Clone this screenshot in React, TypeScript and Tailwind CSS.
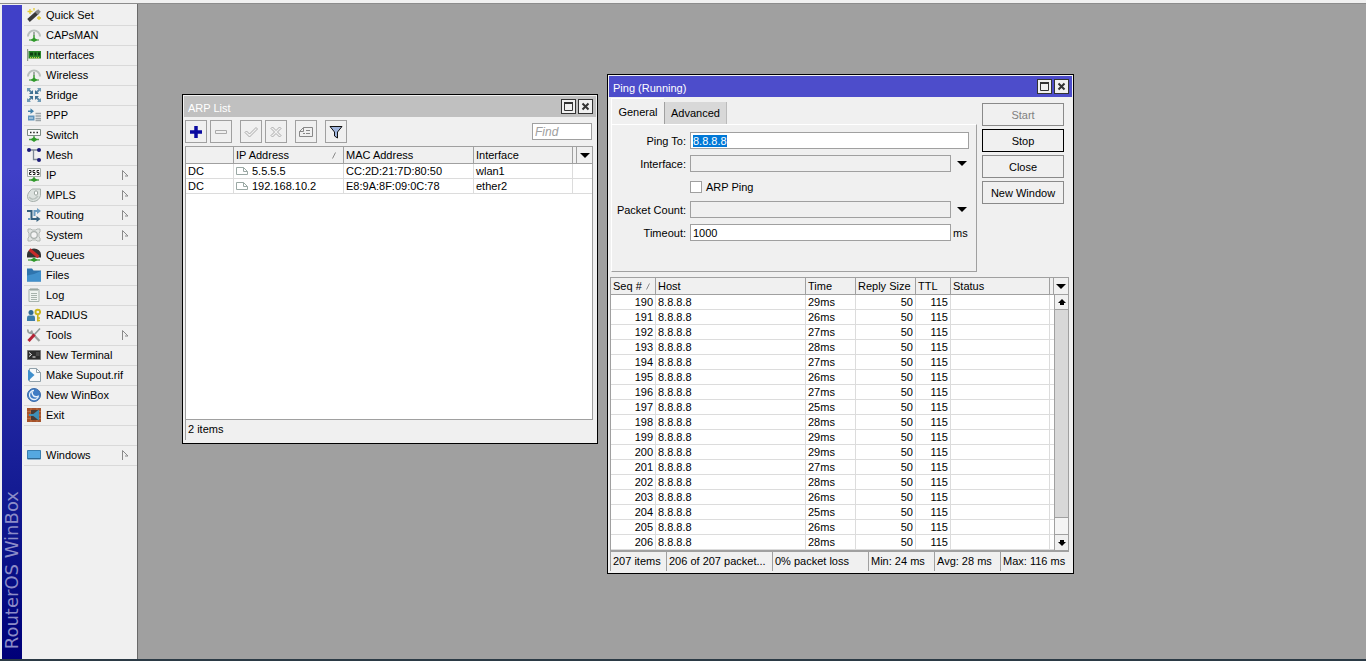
import cx from "clsx"
import React from "react"

type MenuEntry = {
  label: string
  icon: React.ReactNode
  submenu?: boolean
}

const Antenna = () => (
  <>
    <path d="M1 8.500a6 6 0 1 1 12 0" fill="none" stroke="#b9c0bd" strokeWidth="2" />
    <path d="M7 4v3" stroke="#8b9691" strokeWidth="1.500" />
    <path d="M7 7v5" stroke="#3c9a36" strokeWidth="1.500" />
    <path d="M2 12h10" stroke="#6aa865" strokeWidth="1.400" />
    <path d="M3.500 12L7 9.500l3.500 2.500L7 14z" fill="#2f9a2a" />
  </>
)

const MENU: MenuEntry[] = [
  {
    label: "Quick Set",
    icon: (
      <>
        <path d="M1.500 12.500L11 4" stroke="#3a3a3a" strokeWidth="3.800" />
        <path d="M9.500 5.500L12.500 2.500" stroke="#8a8a8a" strokeWidth="3.800" />
        <path d="M3 1v5M.5 3.500h5M7 0v2.500M12 8v4M10 10h4" stroke="#e3cc35" strokeWidth="1.300" />
      </>
    ),
  },
  { label: "CAPsMAN", icon: <Antenna /> },
  {
    label: "Interfaces",
    icon: (
      <>
        <path d="M.6 1v12" stroke="#8c9a8c" strokeWidth="1.200" />
        <path d="M1.500 3h12.500v7.500H1.500z" fill="#2a852a" />
        <path d="M3 4.500h3v3H3zM7.500 4.500h2v3h-2zM11 4.500h2v3h-2z" fill="#0d3f12" />
        <path d="M3 9.800h10" stroke="#b9d24a" strokeWidth="1.400" strokeDasharray="1 1" />
      </>
    ),
  },
  { label: "Wireless", icon: <Antenna /> },
  {
    label: "Bridge",
    icon: (
      <>
        <path d="M1 1l4 4M13 1L9 5M1 13l4-4M13 13l-4-4" stroke="#5b88a6" strokeWidth="1.800" />
        <path d="M6 2v4H2zM8 2v4h4zM6 12V8H2zM8 12V8h4z" fill="#3f6f90" />
        <path d="M0 0h4L0 4zM14 0h-4l4 4zM0 14h4l-4-4zM14 14h-4l4-4z" fill="#6f9ab6" />
      </>
    ),
  },
  {
    label: "PPP",
    icon: (
      <>
        <path d="M1 2.500h2.500V.3L7 3.200 3.500 6V4H1z" fill="#3f7fa8" />
        <path d="M1 7.500h6.500v5H1z" fill="#5f94bd" />
        <path d="M2 10h4" stroke="#d5e5ef" />
        <path d="M8.500 5.500H14M8.500 8H14M8.500 10.500H14M8.500 12.500H14" stroke="#9aa3a8" strokeWidth="1.300" />
      </>
    ),
  },
  {
    label: "Switch",
    icon: (
      <>
        <path d="M.5 1.500h13v6H.5z" fill="#fafafa" stroke="#7d8b84" />
        <path d="M3 4.500h1.500M6.200 4.500h1.500M9.500 4.500H11" stroke="#222" strokeWidth="1.400" />
        <path d="M7 8v3M2 11.500h10" stroke="#55a04e" strokeWidth="1.400" />
        <path d="M3.500 11.500L7 9l3.500 2.500L7 14z" fill="#2f9a2a" />
      </>
    ),
  },
  {
    label: "Mesh",
    icon: (
      <>
        <path d="M2 2h10M6.500 2v9.500H12" fill="none" stroke="#7b8794" strokeWidth="1.300" />
        <circle cx="2" cy="2" r="2" fill="#1b1b78" />
        <circle cx="12" cy="2" r="2" fill="#1b1b78" />
        <circle cx="12" cy="12" r="2" fill="#1b1b78" />
      </>
    ),
  },
  {
    label: "IP",
    submenu: true,
    icon: (
      <>
        <path d="M.5.5h13v8H.5z" fill="#fafafa" stroke="#a9b0ac" />
        <path
          d="M2 2.500h2v2H2.500v2h2M8 2.500H6v2h2v2H6M12 2.500h-2v2h2v2h-2"
          fill="none"
          stroke="#222"
        />
        <path d="M7 9v2M2 12h10" stroke="#55a04e" strokeWidth="1.400" />
        <path d="M3.500 12L7 9.500l3.500 2.500L7 14z" fill="#2f9a2a" />
      </>
    ),
  },
  {
    label: "MPLS",
    submenu: true,
    icon: (
      <>
        <path
          d="M4.500 1.500Q5 1 6 1h7.500v6.500Q12 13 6.500 13.500C2 13.500.5 11 .5 8.500.5 6 2 3.500 4.500 1.500z"
          fill="#dce2df"
          stroke="#a5aeaa"
        />
        <path d="M2 9c2 3 6 3 9-1" fill="none" stroke="#b9c1bd" strokeWidth="1.500" />
        <ellipse cx="9" cy="5" rx="1.700" ry="2.200" fill="#fff" stroke="#9aa59f" />
      </>
    ),
  },
  {
    label: "Routing",
    submenu: true,
    icon: (
      <>
        <path d="M0 3h4.500v8H10" fill="none" stroke="#35607e" strokeWidth="2" />
        <path d="M1 11h2M7.500 8V3h3" fill="none" stroke="#6c9cc0" strokeWidth="2" />
        <path d="M10 0l4 3-4 3z" fill="#6c9cc0" />
        <path d="M9.500 8l4 3-4 3z" fill="#35607e" />
      </>
    ),
  },
  {
    label: "System",
    submenu: true,
    icon: (
      <>
        <path d="M1 1h3l1 1h4l1-1h3v3l-1 1v4l1 1v3h-3l-1-1H5l-1 1H1v-3l1-1V5L1 4z" fill="#e1e4e2" stroke="#b0b6b3" />
        <circle cx="7" cy="7" r="3.300" fill="#f3f3f3" stroke="#aab0ad" strokeWidth="1.200" />
      </>
    ),
  },
  {
    label: "Queues",
    icon: (
      <>
        <path d="M0 9.500V6.500a7 6 0 0 1 14 0v3z" fill="#333" />
        <path d="M2.500 1.500l9 7.500" stroke="#c92a2a" strokeWidth="3" />
        <path d="M1 12h12" stroke="#55a04e" strokeWidth="1.400" />
        <path d="M3.500 12L7 9.500l3.500 2.500L7 14z" fill="#2f9a2a" />
      </>
    ),
  },
  {
    label: "Files",
    icon: (
      <>
        <path d="M0 .5h5l1.500 2H14v11H0z" fill="#2f74ad" />
        <path d="M0 7.500L7 6l7-3v10.500H0z" fill="#4190cc" />
      </>
    ),
  },
  {
    label: "Log",
    icon: (
      <>
        <path d="M2 1.500h10v12H2z" fill="#eff3f1" stroke="#a7b3ad" />
        <path d="M4 0v3M6 0v3M8 0v3M10 0v3" stroke="#8f9b95" />
        <path d="M4 5.500h6M4 7.500h6M4 9.500h6M4 11.500h6" stroke="#a7b3ad" />
      </>
    ),
  },
  {
    label: "RADIUS",
    icon: (
      <>
        <circle cx="4" cy="4.500" r="2.500" fill="#2f6a94" />
        <path d="M0 13V9.500Q0 7.500 2 7.500h4q2 0 2 2V13z" fill="#3c7dab" />
        <circle cx="10.800" cy="4" r="2.300" fill="none" stroke="#c9b51c" strokeWidth="1.900" />
        <path d="M10.800 6v7.500M11 10h2M11 12.500h2" stroke="#c9b51c" strokeWidth="1.600" />
      </>
    ),
  },
  {
    label: "Tools",
    submenu: true,
    icon: (
      <>
        <path d="M3.500 3.500l9 9.500" stroke="#9aa19e" strokeWidth="2.200" />
        <path d="M1 1.500C.5 4 2 5.500 4.500 5L5 2.500" fill="none" stroke="#9aa19e" strokeWidth="1.800" />
        <path d="M13 .5L7 7" stroke="#8f9a98" strokeWidth="1.600" />
        <path d="M7.500 6.500L1.500 13" stroke="#b52436" strokeWidth="3" />
      </>
    ),
  },
  {
    label: "New Terminal",
    icon: (
      <>
        <path d="M.5 2.500h13v9H.5z" fill="#2c2c2c" stroke="#777" />
        <path d="M2 4.500l2.500 2L2 8.500M5.500 9h3" fill="none" stroke="#f2f2f2" />
        <path d="M9 5h3.500M9 7h3.500" stroke="#666" />
      </>
    ),
  },
  {
    label: "Make Supout.rif",
    icon: (
      <>
        <path d="M2.500.5h7l4 4v9h-11z" fill="#f7f9fa" stroke="#8fa0aa" />
        <path d="M9.500.5v4h4" fill="none" stroke="#8fa0aa" />
        <path d="M1 1.500L7.500 7 1 13z" fill="#3f8fcc" />
      </>
    ),
  },
  {
    label: "New WinBox",
    icon: (
      <>
        <circle cx="7" cy="7" r="6.500" fill="#3f7cc4" stroke="#3a6aa8" />
        <path d="M7 2.500a4.500 4.500 0 1 0 4.500 5" fill="none" stroke="#e8f1fa" strokeWidth="1.300" />
        <path d="M5 3.500c0 4 2 6 6 5" fill="none" stroke="#e8f1fa" strokeWidth="1.500" />
      </>
    ),
  },
  {
    label: "Exit",
    icon: (
      <>
        <path d="M0 0h14v14H0z" fill="#a5522a" />
        <path d="M0 3.500h14M0 7h14M0 10.500h14M4 0v14M10 0v14" stroke="#c98357" strokeWidth=".6" />
        <path d="M4 2h8v10H4z" fill="#4a3a34" />
        <path d="M12 1.500v11L5 7z" fill="#3f8fb8" />
        <path d="M2 7h5" stroke="#3f8fb8" strokeWidth="2" />
      </>
    ),
  },
]

const WINDOWS_ENTRY: MenuEntry = {
  label: "Windows",
  submenu: true,
  icon: (
    <>
      <path d="M.5 2.500h13v8.500H.5z" fill="#55a8e0" stroke="#3a7fb0" />
      <path d="M1 10.500h12" stroke="#2f6a94" />
    </>
  ),
}

const PINGS = [29, 26, 27, 28, 27, 26, 27, 25, 28, 29, 29, 27, 28, 26, 25, 26, 28].map(
  (time, i) => ({ seq: 190 + i, time }),
)

const ARP_ROWS = [
  { ip: "5.5.5.5", mac: "CC:2D:21:7D:80:50", iface: "wlan1" },
  { ip: "192.168.10.2", mac: "E8:9A:8F:09:0C:78", iface: "ether2" },
]

const DownArrow = () => (
  <svg viewBox="0 0 10 5" className="h-[5px] w-[10px]">
    <path d="M0 0h10L5 5z" />
  </svg>
)

const SortMark = () => (
  <svg viewBox="0 0 5 7" className="h-[7px] w-[5px] shrink-0">
    <path d="M.5 6.500L3.500.5" stroke="#8a8a8a" />
  </svg>
)

const MenuItem = ({ item }: { item: MenuEntry }) => (
  <li className="border-b border-[#d9d9d9]">
    <button className="flex h-[19px] w-full items-center pr-2 pb-0.5 pl-[3px] text-left">
      <svg viewBox="0 0 14 14" className="mr-[5px] h-3.5 w-3.5 shrink-0">
        {item.icon}
      </svg>
      <span className="flex-1">{item.label}</span>
      {item.submenu && (
        <svg viewBox="0 0 7 10" className="h-[10px] w-[7px]">
          <path d="M.5 10V.5L6 6H3" fill="none" stroke="#8a8a8a" />
        </svg>
      )}
    </button>
  </li>
)

const TitleBar = ({ title, active }: { title: string; active?: boolean }) => (
  <header
    className={cx(
      "flex h-[21px] shrink-0 items-center gap-0.5 pr-[3px] pl-1 text-white",
      active ? "bg-[#4d4dcb]" : "bg-[#c0c0c0]",
    )}
  >
    <h2 className="flex-1 pt-0.5">{title}</h2>
    <button
      aria-label="Maximize"
      className="flex h-[15px] w-[15px] items-center justify-center border border-[#333] bg-[#f0f0f0]"
    >
      <svg viewBox="0 0 9 9" className="h-[9px] w-[9px]">
        <path d="M.5 1v7.500h8V1" fill="none" stroke="#333" />
        <path d="M0 1h9" stroke="#333" strokeWidth="2" />
      </svg>
    </button>
    <button
      aria-label="Close window"
      className="flex h-[15px] w-[15px] items-center justify-center border border-[#333] bg-[#f0f0f0]"
    >
      <svg viewBox="0 0 9 9" className="h-[9px] w-[9px]">
        <path d="M1.500 1.500l6 6M7.500 1.500l-6 6" stroke="#333" strokeWidth="2" />
      </svg>
    </button>
  </header>
)

const ToolButton = ({
  label,
  className,
  children,
}: {
  label: string
  className?: string
  children: React.ReactNode
}) => (
  <button
    aria-label={label}
    className={cx(
      "flex h-[23px] w-[22px] items-center justify-center border border-[#a0a0a0]",
      className,
    )}
  >
    <svg viewBox="0 0 14 14" className="h-3.5 w-3.5" fill="none">
      {children}
    </svg>
  </button>
)

const TH = "h-[17px] border-r border-b border-[#a0a0a0] p-0 pl-0.5 text-left font-normal"
const TD = "h-[15px] border-r border-b border-[#dcdcdc] p-0 pl-0.5"

const ArpWindow = () => (
  <section className="absolute top-[90px] left-11 flex h-[350px] w-[416px] flex-col border border-black bg-[#f0f0f0] p-px">
    <TitleBar title="ARP List" />
    <div className="mt-[3px] ml-px flex h-[23px] items-center pr-1">
      <ToolButton label="Add">
        <path d="M7 1v12M1 7h12" stroke="#0a0aa0" strokeWidth="3.500" />
      </ToolButton>
      <ToolButton label="Remove" className="ml-[3px]">
        <path d="M1.500 5.500h11v3h-11z" stroke="#aaa" />
      </ToolButton>
      <ToolButton label="Enable" className="ml-2">
        <path d="M1 7.500l1.500-1.500L5.500 9 12 2.500 13.500 4l-8 8z" stroke="#aaa" />
      </ToolButton>
      <ToolButton label="Disable" className="ml-[3px]">
        <path
          d="M2 3.500L3.500 2 7 5.500 10.500 2 12 3.500 8.500 7l3.500 3.500-1.500 1.500L7 8.500 3.500 12 2 10.500 5.500 7z"
          stroke="#aaa"
        />
      </ToolButton>
      <ToolButton label="Comment" className="ml-2">
        <path d="M.5 6.500l4-4h9v9H.5zM.5 6.500h4v-4M7 5.500h4M4 8.500h2M7 8.500h4" stroke="#888" />
      </ToolButton>
      <ToolButton label="Filter" className="ml-2">
        <path d="M1 1.500h12L8.500 7v6l-3-2V7z" fill="#9fb4dc" stroke="#111" />
      </ToolButton>
      <input
        aria-label="Find"
        placeholder="Find"
        className="ml-auto h-[17px] w-[60px] border border-[#a0a0a0] bg-white px-0.5 text-xs italic outline-none placeholder:text-[#a0a0a0]"
      />
    </div>
    <div className="mt-[3px] mr-[3px] ml-px flex-1 border border-[#a0a0a0] bg-white">
      <table className="w-full table-fixed border-separate border-spacing-0">
        <colgroup>
          <col className="w-12" />
          <col className="w-[110px]" />
          <col className="w-[130px]" />
          <col />
          <col className="w-1" />
          <col className="w-[15px]" />
        </colgroup>
        <thead className="bg-[#f0f0f0]">
          <tr>
            <th className={TH} aria-label="Flags" />
            <th className={TH}>
              <div className="flex items-center justify-between pr-1.5">
                IP Address
                <SortMark />
              </div>
            </th>
            <th className={TH}>MAC Address</th>
            <th className={TH}>Interface</th>
            <th className={TH} aria-label="Spacer" />
            <th className="border-b border-[#a0a0a0] p-0">
              <button aria-label="Columns" className="flex h-4 w-full items-center justify-center">
                <DownArrow />
              </button>
            </th>
          </tr>
        </thead>
        <tbody>
          {ARP_ROWS.map((row) => (
            <tr key={row.ip}>
              <td className={TD}>DC</td>
              <td className={TD}>
                <div className="flex items-center gap-1">
                  <svg viewBox="0 0 12 8" className="h-2 w-3" fill="none">
                    <path d="M.5.5h7l4 4v3H.5zM7.500.5v4h4" stroke="#9aa8a4" />
                  </svg>
                  {row.ip}
                </div>
              </td>
              <td className={TD}>{row.mac}</td>
              <td className={TD}>{row.iface}</td>
              <td className="border-b border-[#dcdcdc]" colSpan={2} />
            </tr>
          ))}
        </tbody>
      </table>
    </div>
    <footer className="mb-0.5 ml-px h-5 border-l border-[#a0a0a0] pt-0.5 pl-0.5">
      2 items
    </footer>
  </section>
)

const LABEL = "w-[75px] pr-1 text-right"
const FIELD = "h-[17px] min-w-0 flex-1 border border-[#a0a0a0] px-0.5 outline-none"

const DropField = ({ id, label }: { id: string; label: string }) => (
  <div className="flex items-center">
    <label htmlFor={id} className={LABEL}>
      {label}
    </label>
    <select id={id} className={cx(FIELD, "appearance-none bg-[#f0f0f0]")}>
      <option></option>
    </select>
    <button aria-label={`Expand ${label}`} className="flex w-[18px] justify-center pl-1">
      <DownArrow />
    </button>
  </div>
)

const PingWindow = () => (
  <section className="absolute top-[70px] left-[469px] flex h-[500px] w-[467px] flex-col border border-black bg-[#f0f0f0] p-px">
    <TitleBar title="Ping (Running)" active />
    <div className="flex h-[175px] pr-2">
      <div className="mr-[5px] ml-0.5 flex flex-1 flex-col">
        <div role="tablist" className="flex h-[27px] items-end">
          <button
            role="tab"
            aria-selected="true"
            className="h-[26px] w-[53px] border-t border-l border-white"
          >
            General
          </button>
          <button
            role="tab"
            aria-selected="false"
            className="h-[22px] w-[63px] border-r border-l border-r-[#bbb] border-l-[#a0a0a0] bg-[#d8d8d8]"
          >
            Advanced
          </button>
        </div>
        <form className="flex flex-1 flex-col gap-1.5 border border-t-white border-r-[#a0a0a0] border-b-[#a0a0a0] border-l-white pt-[7px] pr-[7px] pl-[3px]">
          <div className="flex items-center">
            <label htmlFor="ping-to" className={LABEL}>
              Ping To:
            </label>
            <input
              id="ping-to"
              defaultValue="8.8.8.8"
              autoFocus
              onFocus={(e) => e.currentTarget.select()}
              className={cx(FIELD, "bg-white selection:bg-[#0078d7] selection:text-white")}
            />
          </div>
          <DropField id="interface" label="Interface:" />
          <div className="flex h-[17px] items-center pl-[75px]">
            <input
              id="arp-ping"
              type="checkbox"
              className="h-3 w-3 appearance-none border border-[#a0a0a0] bg-white"
            />
            <label htmlFor="arp-ping" className="pl-1">
              ARP Ping
            </label>
          </div>
          <DropField id="packet-count" label="Packet Count:" />
          <div className="flex items-center">
            <label htmlFor="timeout" className={LABEL}>
              Timeout:
            </label>
            <input id="timeout" defaultValue="1000" className={cx(FIELD, "bg-white")} />
            <span className="w-[18px] pl-0.5">ms</span>
          </div>
        </form>
      </div>
      <div className="flex w-[82px] flex-col gap-[3px] pt-1.5">
        {["Start", "Stop", "Close", "New Window"].map((label) => (
          <button
            key={label}
            disabled={label === "Start"}
            className={cx(
              "h-[23px] border disabled:text-[#808080]",
              label === "Stop" ? "border-black" : "border-[#8a8a8a]",
            )}
          >
            {label}
          </button>
        ))}
      </div>
    </div>
    <div className="mt-[5px] mr-[3px] ml-px flex border border-b-2 border-[#a0a0a0] bg-white">
      <table className="flex-1 table-fixed border-separate border-spacing-0">
        <colgroup>
          <col className="w-[45px]" />
          <col className="w-[150px]" />
          <col className="w-[50px]" />
          <col className="w-[60px]" />
          <col className="w-[35px]" />
          <col />
          <col className="w-1" />
        </colgroup>
        <thead className="bg-[#f0f0f0]">
          <tr>
            <th className={TH}>
              <div className="flex items-center gap-1">
                <span className="whitespace-nowrap">Seq #</span>
                <SortMark />
              </div>
            </th>
            <th className={TH}>Host</th>
            <th className={TH}>Time</th>
            <th className={cx(TH, "whitespace-nowrap")}>Reply Size</th>
            <th className={TH}>TTL</th>
            <th className={TH}>Status</th>
            <th className={TH} aria-label="Spacer" />
          </tr>
        </thead>
        <tbody>
          {PINGS.map(({ seq, time }) => (
            <tr key={seq}>
              <td className={cx(TD, "pr-0.5 text-right")}>{seq}</td>
              <td className={TD}>8.8.8.8</td>
              <td className={TD}>{time}ms</td>
              <td className={cx(TD, "pr-0.5 text-right")}>50</td>
              <td className={cx(TD, "pr-0.5 text-right")}>115</td>
              <td className={TD} />
              <td className="border-b border-[#dcdcdc]" />
            </tr>
          ))}
        </tbody>
      </table>
      <div className="flex w-[14px] flex-col bg-[#d8d8d8]">
        <button
          aria-label="Columns"
          className="flex h-[17px] items-center justify-center border-b border-[#a0a0a0] bg-[#f0f0f0]"
        >
          <DownArrow />
        </button>
        <button
          aria-label="Scroll up"
          className="flex h-[15px] items-center justify-center border-b border-l border-[#a0a0a0] bg-[#f0f0f0]"
        >
          <svg viewBox="0 0 8 6" className="h-[6px] w-2">
            <path d="M4 0l4 4H6v2H2V4H0z" />
          </svg>
        </button>
        <div className="flex flex-1 flex-col justify-end border-l border-[#a0a0a0]">
          <div className="h-[18px] border-y border-[#a0a0a0] bg-[#f4f4f4]" />
        </div>
        <button
          aria-label="Scroll down"
          className="flex h-[15px] items-center justify-center border-l border-[#a0a0a0] bg-[#f0f0f0]"
        >
          <svg viewBox="0 0 8 6" className="h-[6px] w-2">
            <path d="M4 6l4-4H6V0H2v2H0z" />
          </svg>
        </button>
      </div>
    </div>
    <footer className="mr-[3px] ml-px flex h-[19px] gap-0.5 whitespace-nowrap *:border-l *:border-[#a0a0a0] *:pt-0.5 *:pl-0.5">
      <span className="w-[54px]">207 items</span>
      <span className="w-[104px]">206 of 207 packet...</span>
      <span className="w-[94px]">0% packet loss</span>
      <span className="w-16">Min: 24 ms</span>
      <span className="w-16">Avg: 28 ms</span>
      <span className="flex-1">Max: 116 ms</span>
    </footer>
  </section>
)

export default function App() {
  return (
    <div className="flex h-screen flex-col overflow-hidden border-b-2 border-[#2b3a45] bg-[#f0f0f0] font-['Liberation_Sans',Arial,sans-serif] text-[11px] leading-[14px] text-black">
      <div className="h-1 shrink-0 border-b border-[#8c8c8c]" />
      <div className="flex min-h-0 flex-1">
        <aside className="flex w-[138px] shrink-0 border-r border-[#696969] pt-px pl-0.5">
          <div className="flex w-5 items-center justify-end bg-linear-to-b from-[#4040c8] from-25% to-[#000078] pb-2.5 [writing-mode:vertical-rl]">
            <span className="rotate-180 font-['DejaVu_Sans',sans-serif] text-[18px] leading-5 whitespace-nowrap text-[#8c8cc8]">
              RouterOS WinBox
            </span>
          </div>
          <nav className="flex-1 pt-px pl-0.5">
            <ul>
              {MENU.map((item) => (
                <MenuItem key={item.label} item={item} />
              ))}
              <li className="h-5 border-b border-[#d9d9d9]" />
              <MenuItem item={WINDOWS_ENTRY} />
            </ul>
          </nav>
        </aside>
        <main className="relative flex-1 bg-[#a0a0a0]">
          <ArpWindow />
          <PingWindow />
        </main>
      </div>
    </div>
  )
}
